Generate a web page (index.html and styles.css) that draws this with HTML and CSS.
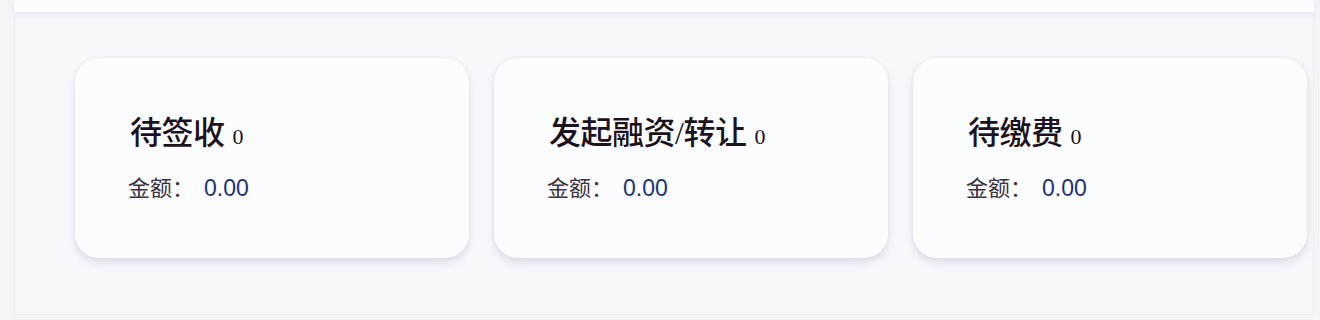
FILE: index.html
```html
<!DOCTYPE html>
<html lang="zh-CN">
<head>
<meta charset="utf-8">
<link rel="stylesheet" href="styles.css">
</head>
<body>
<div class="topbar"></div>
<div class="panel">
  <div class="cards">
    <div class="card">
      <div class="title">待签收<span class="count">0</span></div>
      <div class="amount"><span class="label">金额：</span><span class="value">0.00</span></div>
    </div>
    <div class="card">
      <div class="title">发起融资/转让<span class="count">0</span></div>
      <div class="amount"><span class="label">金额：</span><span class="value">0.00</span></div>
    </div>
    <div class="card">
      <div class="title">待缴费<span class="count">0</span></div>
      <div class="amount"><span class="label">金额：</span><span class="value">0.00</span></div>
    </div>
  </div>
</div>
</body>
</html>
```
FILE: styles.css
```css
html, body {
  margin: 0;
  padding: 0;
  width: 1320px;
  height: 320px;
  overflow: hidden;
  background: #f4f5f9;
}
.topbar {
  height: 12px;
  margin: 0 6px 0 14px;
  background: #fbfcfe;
  box-shadow: 0 3px 6px rgba(200, 205, 220, 0.35);
  position: relative;
  z-index: 1;
}
.panel {
  margin: 0 6px 0 14px;
  height: 303px;
  box-sizing: border-box;
  border-left: 1px solid #e9ebf1;
  border-right: 1px solid #eceef3;
  border-bottom: 1px solid #eceef3;
  background: #f6f7fb;
  padding: 46px 0 0 60px;
}
.cards {
  display: grid;
  grid-template-columns: repeat(3, 394px);
  column-gap: 25px;
}
.card {
  height: 200px;
  box-sizing: border-box;
  background: #fbfcfe;
  border-radius: 24px;
  box-shadow: 0 5px 7px rgba(190, 198, 215, 0.45), 0 0 3px rgba(215, 220, 232, 0.5);
  padding: 56px 0 0 55px;
}
.title {
  font-family: "Liberation Serif", "Noto Sans CJK SC", serif;
  font-size: 32px;
  line-height: 38px;
  color: #1d1320;
  font-weight: 500;
  letter-spacing: -0.5px;
}
.count {
  font-family: "Liberation Serif", serif;
  font-size: 22px;
  margin-left: 8px;
  letter-spacing: 0;
}
.amount {
  margin-top: 16px;
  line-height: 28px;
  font-size: 22px;
}
.label {
  font-family: "Noto Sans CJK SC", sans-serif;
  color: #3b3340;
  margin-left: -2px;
}
.value {
  font-family: "Liberation Sans", Arial, sans-serif;
  color: #173477;
  font-size: 23px;
  margin-left: 10px;
}
```
